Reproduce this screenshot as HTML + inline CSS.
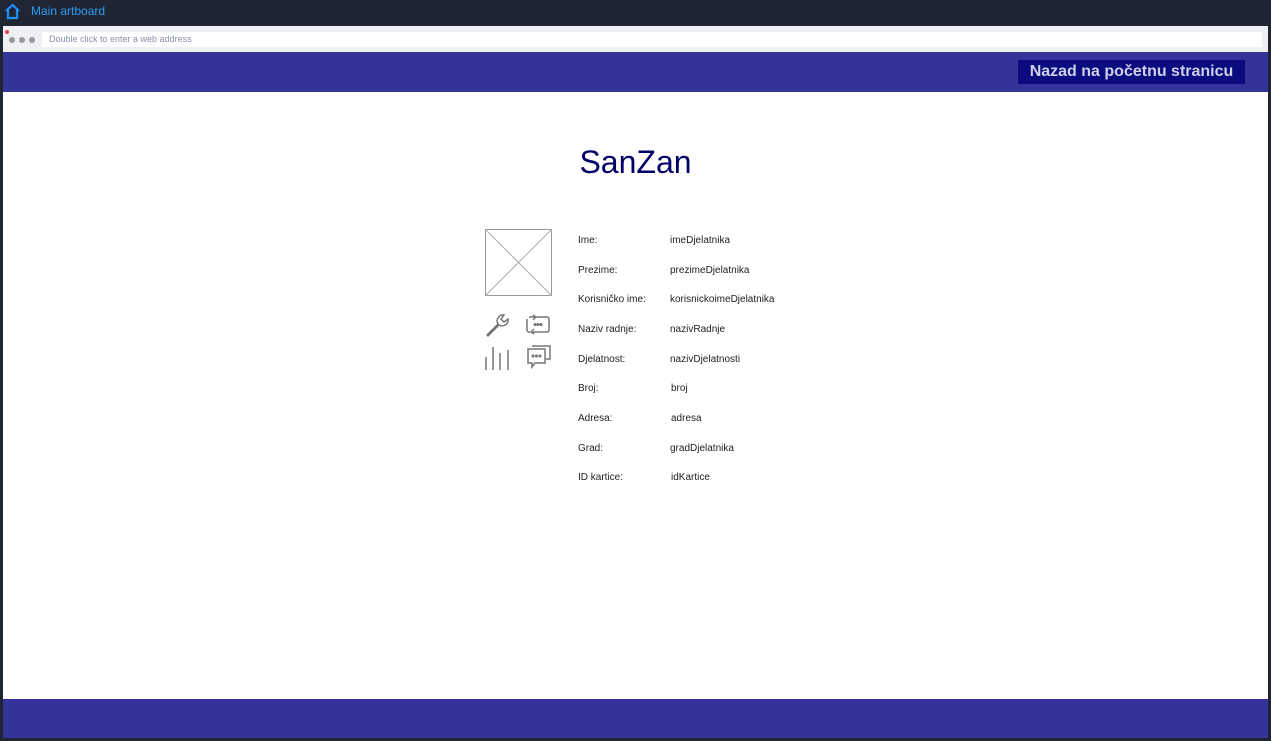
<!DOCTYPE html>
<html><head><meta charset="utf-8"><style>
*{margin:0;padding:0;box-sizing:border-box}
body{width:1271px;height:741px;background:#1f2532;position:relative;overflow:hidden;font-family:"Liberation Sans",sans-serif}
.abs{position:absolute}
.lbl{position:absolute;font-size:10px;color:#222;font-family:"Liberation Sans",sans-serif;top:0}
</style></head><body>
<svg class="abs" style="left:4px;top:3px" width="17" height="17" viewBox="0 0 17 17"><path d="M2 8 L8.5 2 L15 8 M4 7 V15 H13 V7" fill="none" stroke="#1e90ff" stroke-width="2.2"/></svg>
<div class="abs" style="left:31px;top:4px;font-size:12px;color:#2a9df4">Main artboard</div>
<div class="abs" style="left:3px;top:26px;width:1265px;height:26px;background:#eef0f3"></div>
<div class="abs" style="left:5px;top:30px;width:4px;height:4px;border-radius:2px;background:#e04050"></div>
<div class="abs" style="left:9px;top:37px;width:6px;height:6px;border-radius:3px;background:#999"></div>
<div class="abs" style="left:19px;top:37px;width:6px;height:6px;border-radius:3px;background:#999"></div>
<div class="abs" style="left:29px;top:37px;width:6px;height:6px;border-radius:3px;background:#999"></div>
<div class="abs" style="left:42px;top:32px;width:1220px;height:15px;background:#fff;font-size:9px;color:#8890a8;padding:2px 7px">Double click to enter a web address</div>
<div class="abs" style="left:3px;top:52px;width:1265px;height:40px;background:#333399"></div>
<div class="abs" style="left:1018px;top:60px;width:227px;height:24px;background:#0b0b80;color:#cfcfe6;font-size:16px;font-weight:bold;text-align:center;line-height:24px">Nazad na početnu stranicu</div>
<div class="abs" style="left:3px;top:92px;width:1265px;height:607px;background:#fff"></div>
<div class="abs" style="left:3px;top:699px;width:1265px;height:39px;background:#333399"></div>
<div class="abs" style="left:0;top:144px;width:1271px;text-align:center;font-size:32px;color:#000066;line-height:36px">SanZan</div>
<svg class="abs" style="left:485px;top:229px" width="67" height="67"><rect x="0.5" y="0.5" width="66" height="66" fill="none" stroke="#999"/><path d="M0 0L67 67M67 0L0 67" stroke="#aaa"/></svg>
<svg class="abs" style="left:483px;top:312px" width="72" height="60" fill="none" stroke="#777" stroke-width="1.5">
<path d="M4 23 L15 12 A6 6 0 0 1 21 3 L18 7 L21 10 L25 7 A6 6 0 0 1 16 13 L5 24 Z"/>
<path d="M46 5 H64 A2 2 0 0 1 66 7 V18 A2 2 0 0 1 64 20 H50 M51 22 L48 20 L51 17 M50 3 L53 5 L50 8 M46 5 H47 M44 7 V18 A2 2 0 0 0 46 20 H47"/>
<circle cx="52" cy="12.5" r=".8" fill="#777"/><circle cx="55" cy="12.5" r=".8" fill="#777"/><circle cx="58" cy="12.5" r=".8" fill="#777"/>
<path d="M3 45 V58 M10 35 V58 M17 41 V58 M25 38 V58"/>
<path d="M45 37 H62 V51 H52 L49 55 V51 H45 Z M50 35 V34 H67 V47 H63"/>
<circle cx="50" cy="44" r=".8" fill="#777"/><circle cx="53.5" cy="44" r=".8" fill="#777"/><circle cx="57" cy="44" r=".8" fill="#777"/>
</svg>
<div class="abs" style="left:0;top:2px;width:1271px;height:600px">
<div class="lbl" style="left:578px;top:233px">Ime:</div><div class="lbl" style="left:670px;top:233px">imeDjelatnika</div>
<div class="lbl" style="left:578px;top:263px">Prezime:</div><div class="lbl" style="left:670px;top:263px">prezimeDjelatnika</div>
<div class="lbl" style="left:578px;top:292px">Korisničko ime:</div><div class="lbl" style="left:670px;top:292px">korisnickoimeDjelatnika</div>
<div class="lbl" style="left:578px;top:322px">Naziv radnje:</div><div class="lbl" style="left:670px;top:322px">nazivRadnje</div>
<div class="lbl" style="left:578px;top:352px">Djelatnost:</div><div class="lbl" style="left:670px;top:352px">nazivDjelatnosti</div>
<div class="lbl" style="left:578px;top:381px">Broj:</div><div class="lbl" style="left:671px;top:381px">broj</div>
<div class="lbl" style="left:578px;top:411px">Adresa:</div><div class="lbl" style="left:671px;top:411px">adresa</div>
<div class="lbl" style="left:578px;top:441px">Grad:</div><div class="lbl" style="left:670px;top:441px">gradDjelatnika</div>
<div class="lbl" style="left:578px;top:470px">ID kartice:</div><div class="lbl" style="left:671px;top:470px">idKartice</div>
</div>
</body></html>
